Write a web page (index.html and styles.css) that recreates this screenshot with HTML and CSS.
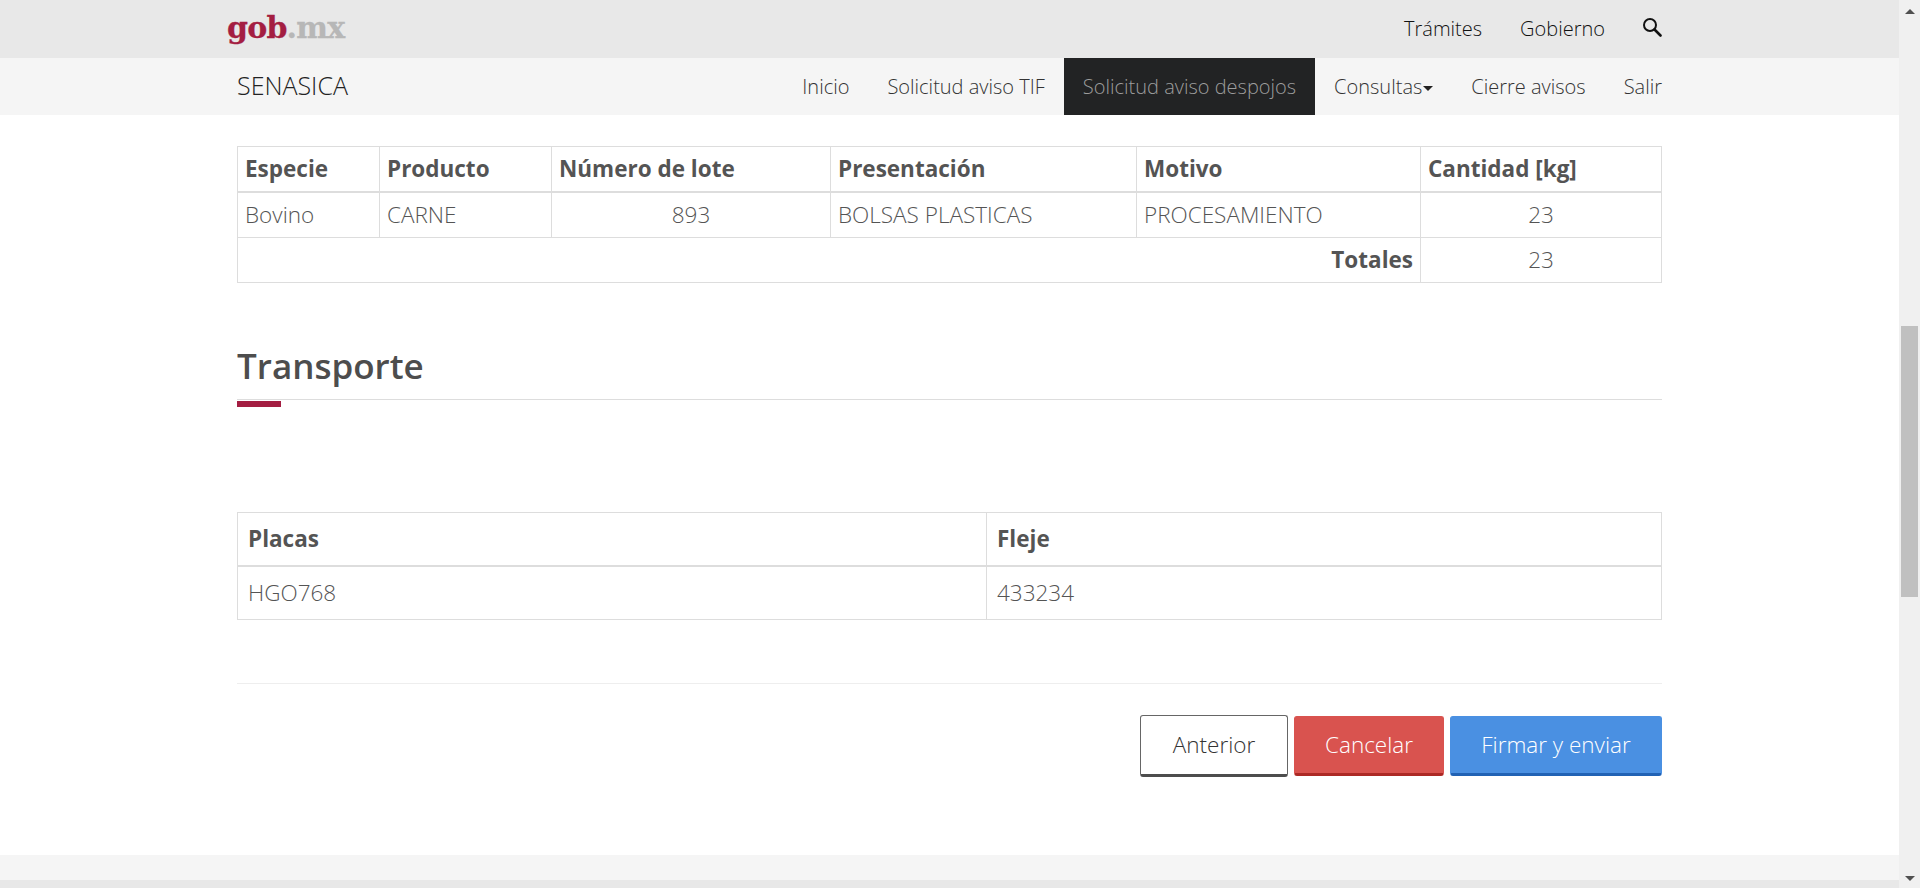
FILE: index.html
```html
<!DOCTYPE html>
<html lang="es">

<head>
    <meta charset="UTF-8">
    <title>SENASICA</title>
    <link rel="stylesheet" href="styles.css">
</head>

<body>
    <div class="page">
        <div class="top-bar">
            <div class="wrap top-inner">
                <a class="logo"><span class="logo-gob">gob</span><span class="logo-mx">.mx</span></a>
                <div class="top-links">
                    <a>Trámites</a>
                    <a>Gobierno</a>
                    <svg class="search-icon" width="20" height="20" viewBox="0 0 20 20">
                        <circle cx="8" cy="8" r="6" fill="none" stroke="#111" stroke-width="2"></circle>
                        <path d="M12.5 12.5L18.5 18.5" stroke="#111" stroke-width="2.6" stroke-linecap="round"></path>
                    </svg>
                </div>
            </div>
        </div>
        <div class="sub-bar">
            <div class="wrap sub-inner">
                <a class="brand">SENASICA</a>
                <ul class="menu">
                    <li><a>Inicio</a></li>
                    <li><a>Solicitud aviso TIF</a></li>
                    <li class="active"><a>Solicitud aviso despojos</a></li>
                    <li><a>Consultas<span class="caret"></span></a></li>
                    <li><a>Cierre avisos</a></li>
                    <li><a>Salir</a></li>
                </ul>
            </div>
        </div>

        <div class="wrap content">
            <table class="data-table products">
                <colgroup>
                    <col class="c1"><col class="c2"><col class="c3"><col class="c4"><col class="c5"><col class="c6">
                </colgroup>
                <thead>
                    <tr>
                        <th>Especie</th>
                        <th>Producto</th>
                        <th>Número de lote</th>
                        <th>Presentación</th>
                        <th>Motivo</th>
                        <th>Cantidad [kg]</th>
                    </tr>
                </thead>
                <tbody>
                    <tr>
                        <td>Bovino</td>
                        <td>CARNE</td>
                        <td class="center">893</td>
                        <td>BOLSAS PLASTICAS</td>
                        <td>PROCESAMIENTO</td>
                        <td class="center">23</td>
                    </tr>
                    <tr>
                        <td colspan="5" class="total-label">Totales</td>
                        <td class="center">23</td>
                    </tr>
                </tbody>
            </table>

            <h2 class="section-title">Transporte</h2>
            <div class="section-rule"></div>

            <table class="data-table transport">
                <thead>
                    <tr>
                        <th class="half">Placas</th>
                        <th>Fleje</th>
                    </tr>
                </thead>
                <tbody>
                    <tr>
                        <td>HGO768</td>
                        <td>433234</td>
                    </tr>
                </tbody>
            </table>

            <hr class="divider">

            <div class="actions">
                <button class="btn btn-default">Anterior</button>
                <button class="btn btn-danger">Cancelar</button>
                <button class="btn btn-primary">Firmar y enviar</button>
            </div>
        </div>

        <div class="footer-strip"></div>
        <div class="footer-dark"></div>
    </div>

    <div class="scrollbar">
        <span class="arrow-up"></span>
        <div class="thumb"></div>
        <span class="arrow-down"></span>
    </div>
</body>

</html>
```

FILE: styles.css
```css
html,
body {
    margin: 0;
    height: 888px;
    overflow: hidden;
}

body {
    display: flex;
    font-family: "Open Sans", Arial, sans-serif;
    font-weight: 300;
    color: #545454;
    background: #fff;
}

.page {
    flex: 1;
    min-width: 0;
}

.wrap {
    width: 1425px;
    margin-left: 237px;
}

.top-bar {
    height: 58px;
    background: #e8e8e8;
}

.top-inner {
    display: flex;
    justify-content: space-between;
    align-items: center;
    height: 58px;
}

.logo {
    margin-left: -10px;
    margin-bottom: 3px;
    font-family: "DejaVu Serif", "Liberation Serif", serif;
    font-weight: 700;
    font-size: 30px;
    letter-spacing: -0.8px;
    -webkit-text-stroke: 0.3px;
}

.logo-gob {
    color: #a41e42;
}

.logo-mx {
    color: #b7b7b7;
}

.top-links {
    display: flex;
    align-items: center;
    color: #111;
    font-size: 20px;
}

.top-links a {
    margin-right: 38px;
    padding-bottom: 2px;
}

.top-links a:nth-child(2) {
    margin-right: 37px;
}

.search-icon {
    display: block;
    margin-bottom: 5px;
}

.sub-bar {
    height: 57px;
    background: #f5f5f5;
}

.sub-inner {
    display: flex;
    justify-content: space-between;
    align-items: center;
    height: 57px;
}

.brand {
    margin-bottom: 3px;
    color: #222;
    font-size: 25px;
}

.menu {
    display: flex;
    height: 57px;
    margin: 0;
    padding: 0;
    list-style: none;
    font-size: 20px;
    color: #333;
}

.menu li {
    display: flex;
    align-items: center;
    padding: 0 19px;
}

.menu li:last-child {
    padding-right: 0;
}

.menu .active {
    background: #222324;
    color: #9d9d9d;
}

.caret {
    display: inline-block;
    margin-left: 1px;
    vertical-align: middle;
    border-top: 5px solid #222;
    border-left: 5px solid transparent;
    border-right: 5px solid transparent;
}

.content {
    padding-top: 31px;
}

.data-table {
    width: 100%;
    border-collapse: collapse;
    table-layout: fixed;
    font-size: 22.5px;
}

.data-table th,
.data-table td {
    border: 1px solid #ddd;
    text-align: left;
}

.data-table th {
    border-bottom-width: 2px;
    font-weight: 700;
}

.products th,
.products td {
    height: 42px;
    padding: 0 7px 2px;
}

.transport th,
.transport td {
    height: 50px;
    padding: 0 10px 2px;
}

.c1 { width: 142px; }
.c2 { width: 172px; }
.c3 { width: 279px; }
.c4 { width: 306px; }
.c5 { width: 284px; }

.half {
    width: 728px;
}

.data-table .center {
    text-align: center;
}

.data-table .total-label {
    text-align: right;
    font-weight: 700;
}

.section-title {
    margin: 60px 0 0;
    font-size: 35px;
    line-height: 45px;
    font-weight: 600;
    color: #4d4d4d;
}

.section-rule {
    position: relative;
    height: 1px;
    margin-top: 11px;
    background: #ddd;
}

.section-rule::after {
    content: "";
    position: absolute;
    left: 0;
    top: 2px;
    width: 44px;
    height: 6px;
    background: #a41e42;
}

.transport {
    margin-top: 112px;
}

.divider {
    height: 1px;
    margin: 63px 0 0;
    border: 0;
    background: #eee;
}

.actions {
    display: flex;
    justify-content: flex-end;
    gap: 6px;
    margin-top: 31px;
}

.btn {
    height: 60px;
    padding: 0 0 2px;
    border: 1px solid transparent;
    border-bottom-width: 3px;
    border-radius: 3px;
    font-family: inherit;
    font-weight: 300;
    font-size: 22.5px;
    color: #fff;
}

.btn-default {
    width: 148px;
    height: 62px;
    border-color: #666 #666 #4d4d4d;
    background: #fff;
    color: #333;
}

.btn-danger {
    width: 150px;
    margin-top: 1px;
    border-color: #d9534f #d9534f #ac2925;
    background: #d9534f;
}

.btn-primary {
    width: 212px;
    margin-top: 1px;
    border-color: #4a90e2 #4a90e2 #2162b4;
    background: #4a90e2;
}

.footer-strip {
    height: 25px;
    margin-top: 78px;
    background: #f5f5f5;
}

.footer-dark {
    height: 8px;
    background: #e8e8e8;
}

.scrollbar {
    display: flex;
    flex-direction: column;
    width: 21px;
    height: 888px;
    background: #f0f0f0;
}

.arrow-up {
    align-self: center;
    margin-top: 9px;
    border-bottom: 5px solid #505050;
    border-left: 5px solid transparent;
    border-right: 5px solid transparent;
}

.thumb {
    width: 17px;
    height: 271px;
    margin: 312px 0 0 2px;
    background: #c0c0c0;
}

.arrow-down {
    align-self: center;
    margin-top: auto;
    margin-bottom: 7px;
    border-top: 5px solid #505050;
    border-left: 5px solid transparent;
    border-right: 5px solid transparent;
}
```
